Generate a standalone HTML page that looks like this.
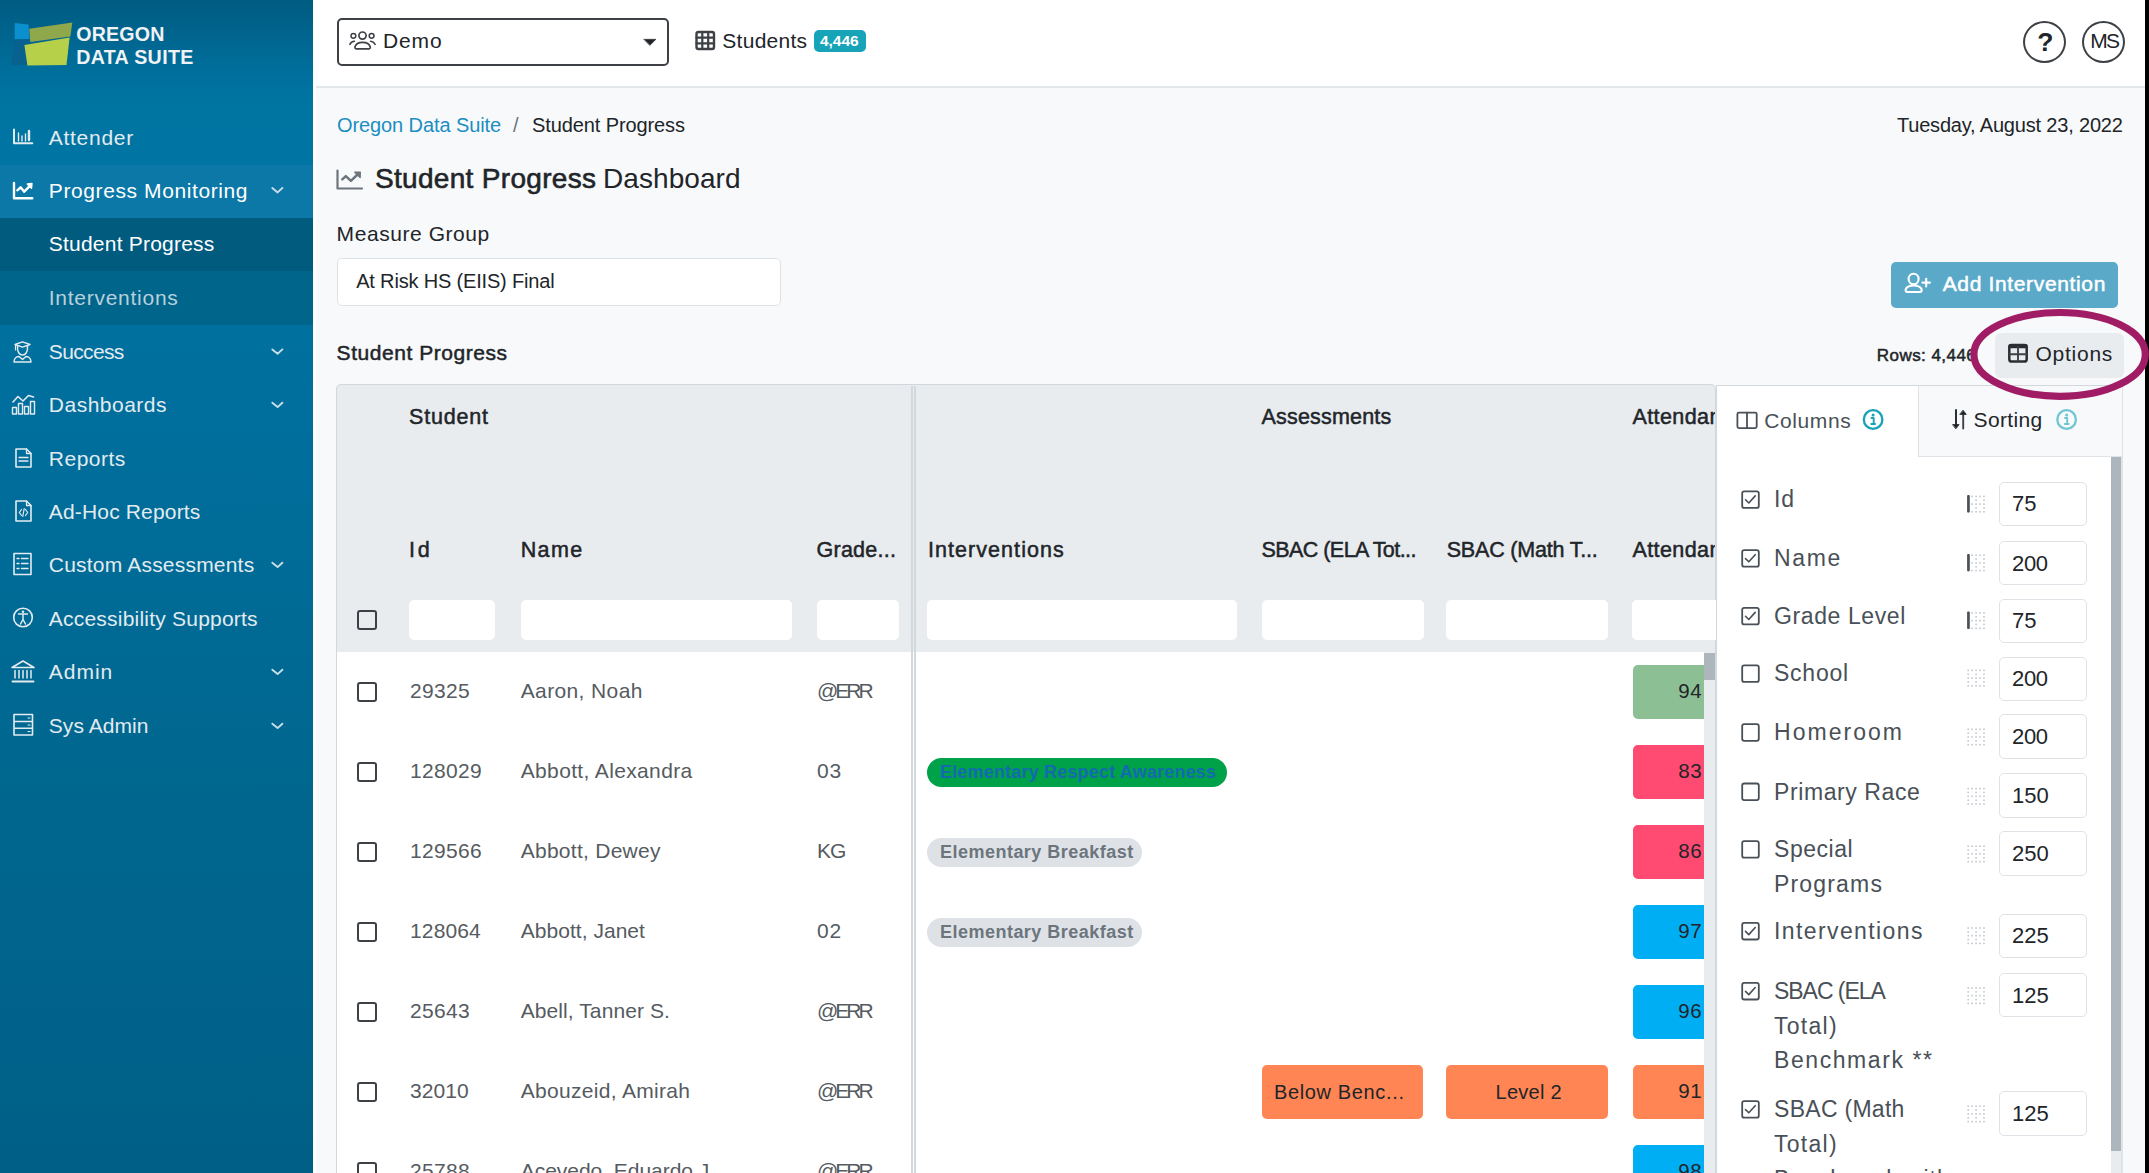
<!DOCTYPE html>
<html><head><meta charset="utf-8"><title>Student Progress Dashboard</title><style>
html,body{margin:0;padding:0;width:2149px;height:1173px;overflow:hidden;background:#f8f9fa;font-family:"Liberation Sans", sans-serif;}
.t{position:absolute;white-space:nowrap;line-height:1;}
.r{position:absolute;}
</style></head>
<body>
<div class="r" style="left:0;top:0;width:313px;height:1173px;background:linear-gradient(180deg,#005b81 0px,#00719f 80px,#0075a2 105px,#0074a2 160px,#006e9c 433px,#00678f 773px,#005f87 1173px);"></div>
<div class="r" style="left:0px;top:165px;width:313px;height:53px;background:#0b78a7;"></div>
<div class="r" style="left:0px;top:218px;width:313px;height:53px;background:#005b7f;"></div>
<div class="r" style="left:0px;top:271px;width:313px;height:54px;background:#00658a;"></div>
<div class="r" style="left:313px;top:0px;width:3px;height:1173px;background:#ffffff;"></div>
<svg class="r" style="left:0;top:0" width="210" height="80" viewBox="0 0 210 80">
<polygon points="14.7,23 28.5,24.5 29.5,39 14.7,39.5" fill="#0b8fce"/>
<polygon points="14.5,39.5 29.5,39 28,65 11.7,65" fill="#08618e"/>
<polygon points="29.3,28.8 72.3,22.5 70.4,36.6 30.3,42" fill="#8fa84c"/>
<polygon points="24.4,45 69.6,37.6 66.5,65 27.4,65.5" fill="#b6d04a"/>
</svg>
<div class="r" style="left:316px;top:0px;width:1829px;height:86px;background:#ffffff;"></div>
<div class="r" style="left:316px;top:86px;width:1829px;height:2px;background:#e3e7ea;"></div>
<div class="r" style="left:316px;top:88px;width:1829px;height:1085px;background:#f8f9fa;"></div>
<div class="r" style="left:2145px;top:0px;width:4px;height:1173px;background:#000000;"></div>
<div class="r" style="left:336.5px;top:18px;width:328px;height:43.5px;border:2.2px solid #3d4145;border-radius:5px;background:#fff"></div>
<div class="r" style="left:814px;top:30px;width:52px;height:22.2px;border-radius:5px;background:#17a3b8"></div>
<div class="r" style="left:2023px;top:21px;width:39px;height:38px;border:2.2px solid #3d4145;border-radius:50%"></div>
<div class="r" style="left:2082.2px;top:21px;width:39px;height:38px;border:2.2px solid #3d4145;border-radius:50%"></div>
<div class="r" style="left:336.6px;top:257.7px;width:442px;height:46px;border:1.6px solid #dfe3e7;border-radius:5px;background:#fff"></div>
<div class="r" style="left:1891.2px;top:262.1px;width:227.3px;height:46px;border-radius:5px;background:#5aa9c9"></div>
<div class="r" style="left:1995.2px;top:332.7px;width:129px;height:45.7px;border-radius:6px;background:#e9ecef"></div>
<div class="r" style="left:336px;top:384px;width:1380px;height:800px;border-radius:5px;background:#fff;"></div>
<div class="r" style="left:336px;top:384px;width:1380px;height:267.70000000000005px;background:#e9ecef;border-top-left-radius:5px;border-top-right-radius:5px;"></div>
<div class="r" style="left:336px;top:384px;width:1380px;height:800px;border:1.5px solid #d3d8dd;border-radius:5px;box-sizing:border-box"></div>
<div class="r" style="left:911px;top:385.5px;width:1.5px;height:787.5px;background:#d3d8dd;"></div>
<div class="r" style="left:914.2px;top:385.5px;width:1.5px;height:787.5px;background:#d3d8dd;"></div>
<div class="r" style="left:408.7px;top:599.5px;width:86.69999999999999px;height:40.799999999999955px;background:#ffffff;border-radius:5px;"></div>
<div class="r" style="left:520.7px;top:599.5px;width:271.19999999999993px;height:40.799999999999955px;background:#ffffff;border-radius:5px;"></div>
<div class="r" style="left:817.2px;top:599.5px;width:82.09999999999991px;height:40.799999999999955px;background:#ffffff;border-radius:5px;"></div>
<div class="r" style="left:927.4px;top:599.5px;width:309.6px;height:40.799999999999955px;background:#ffffff;border-radius:5px;"></div>
<div class="r" style="left:1262.4px;top:599.5px;width:161.19999999999982px;height:40.799999999999955px;background:#ffffff;border-radius:5px;"></div>
<div class="r" style="left:1446.1px;top:599.5px;width:161.80000000000018px;height:40.799999999999955px;background:#ffffff;border-radius:5px;"></div>
<div class="r" style="left:1632.4px;top:599.5px;width:97.59999999999991px;height:40.799999999999955px;background:#ffffff;border-radius:5px;"></div>
<div class="r" style="left:1632.7px;top:665.2px;width:71.1px;height:53.6px;border-radius:5px 0 0 5px;background:#8cbf94"></div>
<div class="r" style="left:1632.7px;top:745.2px;width:71.1px;height:53.6px;border-radius:5px 0 0 5px;background:#ff4a72"></div>
<div class="r" style="left:927.3px;top:757.6px;width:300.2px;height:29.5px;border-radius:15px;background:#00a249"></div>
<div class="r" style="left:1632.7px;top:825.2px;width:71.1px;height:53.6px;border-radius:5px 0 0 5px;background:#ff4a72"></div>
<div class="r" style="left:927.3px;top:837.6px;width:214.3px;height:29.5px;border-radius:15px;background:#dee2e6"></div>
<div class="r" style="left:1632.7px;top:905.2px;width:71.1px;height:53.6px;border-radius:5px 0 0 5px;background:#00aef4"></div>
<div class="r" style="left:927.3px;top:917.6px;width:214.3px;height:29.5px;border-radius:15px;background:#dee2e6"></div>
<div class="r" style="left:1632.7px;top:985.2px;width:71.1px;height:53.6px;border-radius:5px 0 0 5px;background:#00aef4"></div>
<div class="r" style="left:1632.7px;top:1065.2px;width:71.1px;height:53.6px;border-radius:5px 0 0 5px;background:#ff8554"></div>
<div class="r" style="left:1262.3px;top:1065.2px;width:161px;height:53.6px;border-radius:5px;background:#ff8554"></div>
<div class="r" style="left:1446.4px;top:1065.2px;width:161.3px;height:53.6px;border-radius:5px;background:#ff8554"></div>
<div class="r" style="left:1632.7px;top:1145.2px;width:71.1px;height:53.6px;border-radius:5px 0 0 5px;background:#00aef4"></div>
<div class="r" style="left:357.4px;top:609.5px;width:20px;height:20px;border:2.2px solid #3d4145;border-radius:3px;box-sizing:border-box"></div><div class="r" style="left:357.4px;top:682.0px;width:20px;height:20px;border:2.2px solid #3d4145;border-radius:3px;box-sizing:border-box"></div><div class="r" style="left:357.4px;top:762.0px;width:20px;height:20px;border:2.2px solid #3d4145;border-radius:3px;box-sizing:border-box"></div><div class="r" style="left:357.4px;top:842.0px;width:20px;height:20px;border:2.2px solid #3d4145;border-radius:3px;box-sizing:border-box"></div><div class="r" style="left:357.4px;top:922.0px;width:20px;height:20px;border:2.2px solid #3d4145;border-radius:3px;box-sizing:border-box"></div><div class="r" style="left:357.4px;top:1002.0px;width:20px;height:20px;border:2.2px solid #3d4145;border-radius:3px;box-sizing:border-box"></div><div class="r" style="left:357.4px;top:1082.0px;width:20px;height:20px;border:2.2px solid #3d4145;border-radius:3px;box-sizing:border-box"></div><div class="r" style="left:357.4px;top:1162.0px;width:20px;height:20px;border:2.2px solid #3d4145;border-radius:3px;box-sizing:border-box"></div>
<div class="t" id="t0" style="left:48.80px;top:126.71px;font-size:21px;font-weight:400;color:#e3ebf0;letter-spacing:0.715px;">Attender</div>
<div class="t" id="t1" style="left:48.80px;top:179.50px;font-size:21px;font-weight:400;color:#ffffff;letter-spacing:0.598px;">Progress Monitoring</div>
<div class="t" id="t2" style="left:48.80px;top:233.00px;font-size:21px;font-weight:400;color:#ffffff;letter-spacing:0.216px;">Student Progress</div>
<div class="t" id="t3" style="left:48.80px;top:286.61px;font-size:21px;font-weight:400;color:#b9d0dc;letter-spacing:0.730px;">Interventions</div>
<div class="t" id="t4" style="left:48.80px;top:341.40px;font-size:21px;font-weight:400;color:#e3ebf0;letter-spacing:-0.644px;">Success</div>
<div class="t" id="t5" style="left:48.80px;top:394.21px;font-size:21px;font-weight:400;color:#e3ebf0;letter-spacing:0.496px;">Dashboards</div>
<div class="t" id="t6" style="left:48.80px;top:448.00px;font-size:21px;font-weight:400;color:#e3ebf0;letter-spacing:0.495px;">Reports</div>
<div class="t" id="t7" style="left:48.80px;top:501.21px;font-size:21px;font-weight:400;color:#e3ebf0;letter-spacing:0.162px;">Ad-Hoc Reports</div>
<div class="t" id="t8" style="left:48.80px;top:554.00px;font-size:21px;font-weight:400;color:#e3ebf0;letter-spacing:0.202px;">Custom Assessments</div>
<div class="t" id="t9" style="left:48.80px;top:608.11px;font-size:21px;font-weight:400;color:#e3ebf0;letter-spacing:0.217px;">Accessibility Supports</div>
<div class="t" id="t10" style="left:48.80px;top:661.31px;font-size:21px;font-weight:400;color:#e3ebf0;letter-spacing:0.989px;">Admin</div>
<div class="t" id="t11" style="left:48.80px;top:715.00px;font-size:21px;font-weight:400;color:#e3ebf0;letter-spacing:0.039px;">Sys Admin</div>
<div class="t" id="t12" style="left:76.20px;top:24.61px;font-size:19.6px;font-weight:700;color:#f0f3f5;letter-spacing:0.212px;">OREGON</div>
<div class="t" id="t13" style="left:76.20px;top:48.00px;font-size:19.6px;font-weight:700;color:#f0f3f5;letter-spacing:0.357px;">DATA SUITE</div>
<div class="t" id="t14" style="left:2037.30px;top:28.90px;font-size:26.5px;font-weight:700;color:#212529;">?</div>
<div class="t" id="t15" style="left:383.00px;top:29.81px;font-size:21px;font-weight:400;color:#212529;letter-spacing:0.887px;">Demo</div>
<div class="t" id="t16" style="left:722.30px;top:29.61px;font-size:21px;font-weight:400;color:#212529;letter-spacing:0.272px;">Students</div>
<div class="t" id="t17" style="left:820.00px;top:32.71px;font-size:15.5px;font-weight:700;color:#ffffff;letter-spacing:-0.042px;">4,446</div>
<div class="t" id="t18" style="left:2090.20px;top:29.81px;font-size:21px;font-weight:400;color:#212529;letter-spacing:-1.793px;">MS</div>
<div class="t" id="t19" style="left:337.00px;top:115.01px;font-size:20px;font-weight:400;color:#1b8ec2;letter-spacing:-0.096px;">Oregon Data Suite</div>
<div class="t" id="t20" style="left:513.00px;top:115.01px;font-size:20px;font-weight:400;color:#6c757d;letter-spacing:0.060px;">/</div>
<div class="t" id="t21" style="left:532.00px;top:115.01px;font-size:20px;font-weight:400;color:#212529;letter-spacing:-0.102px;">Student Progress</div>
<div class="t" id="t22" style="left:1896.90px;top:114.61px;font-size:20px;font-weight:400;color:#212529;letter-spacing:-0.180px;">Tuesday, August 23, 2022</div>
<div class="t" id="t23" style="left:375.00px;top:164.61px;font-size:28px;font-weight:400;color:#212529;-webkit-text-stroke:0.6px #212529;letter-spacing:0.310px;">Student Progress</div>
<div class="t" id="t24" style="left:603.00px;top:165.20px;font-size:28px;font-weight:400;color:#212529;letter-spacing:0.074px;">Dashboard</div>
<div class="t" id="t25" style="left:336.60px;top:222.61px;font-size:21px;font-weight:400;color:#212529;letter-spacing:0.565px;">Measure Group</div>
<div class="t" id="t26" style="left:356.20px;top:270.61px;font-size:20px;font-weight:400;color:#212529;letter-spacing:-0.173px;">At Risk HS (EIIS) Final</div>
<div class="t" id="t27" style="left:336.60px;top:341.90px;font-size:21px;font-weight:400;color:#212529;-webkit-text-stroke:0.5px #212529;letter-spacing:0.549px;">Student Progress</div>
<div class="t" id="t28" style="left:1942.70px;top:272.71px;font-size:21px;font-weight:400;color:#ffffff;-webkit-text-stroke:0.5px #ffffff;letter-spacing:0.649px;">Add Intervention</div>
<div class="t" id="t29" style="left:1876.80px;top:346.60px;font-size:17px;font-weight:400;color:#212529;-webkit-text-stroke:0.5px #212529;letter-spacing:0.446px;">Rows: 4,446</div>
<div class="t" id="t30" style="left:2035.50px;top:343.00px;font-size:21px;font-weight:400;color:#212529;letter-spacing:0.738px;">Options</div>
<div class="t" id="t31" style="left:409.00px;top:407.40px;font-size:21.5px;font-weight:400;color:#212529;-webkit-text-stroke:0.5px #212529;letter-spacing:0.810px;">Student</div>
<div class="t" id="t32" style="left:1261.50px;top:407.21px;font-size:21.5px;font-weight:400;color:#212529;-webkit-text-stroke:0.5px #212529;letter-spacing:0.190px;">Assessments</div>
<div class="t" id="t33" style="left:1632.40px;top:407.21px;font-size:21.5px;font-weight:400;color:#212529;-webkit-text-stroke:0.5px #212529;letter-spacing:0.420px;width:82.9px;overflow:hidden;">Attendance</div>
<div class="t" id="t34" style="left:409.00px;top:540.40px;font-size:21.5px;font-weight:400;color:#212529;-webkit-text-stroke:0.5px #212529;letter-spacing:2.827px;">Id</div>
<div class="t" id="t35" style="left:520.70px;top:540.40px;font-size:21.5px;font-weight:400;color:#212529;-webkit-text-stroke:0.5px #212529;letter-spacing:1.402px;">Name</div>
<div class="t" id="t36" style="left:816.60px;top:540.40px;font-size:21.5px;font-weight:400;color:#212529;-webkit-text-stroke:0.5px #212529;letter-spacing:0.228px;">Grade...</div>
<div class="t" id="t37" style="left:928.00px;top:540.40px;font-size:21.5px;font-weight:400;color:#212529;-webkit-text-stroke:0.5px #212529;letter-spacing:1.054px;">Interventions</div>
<div class="t" id="t38" style="left:1261.50px;top:540.40px;font-size:21.5px;font-weight:400;color:#212529;-webkit-text-stroke:0.5px #212529;letter-spacing:-0.555px;">SBAC (ELA Tot...</div>
<div class="t" id="t39" style="left:1446.70px;top:540.40px;font-size:21.5px;font-weight:400;color:#212529;-webkit-text-stroke:0.5px #212529;letter-spacing:-0.189px;">SBAC (Math T...</div>
<div class="t" id="t40" style="left:1632.40px;top:540.40px;font-size:21.5px;font-weight:400;color:#212529;-webkit-text-stroke:0.5px #212529;letter-spacing:0.420px;width:82.9px;overflow:hidden;">Attendance</div>
<div class="t" id="t41" style="left:410.00px;top:679.81px;font-size:21px;font-weight:400;color:#555b61;letter-spacing:0.321px;">29325</div>
<div class="t" id="t42" style="left:520.70px;top:679.81px;font-size:21px;font-weight:400;color:#555b61;letter-spacing:0.377px;">Aaron, Noah</div>
<div class="t" id="t43" style="left:817.00px;top:679.81px;font-size:21px;font-weight:400;color:#555b61;letter-spacing:-3.030px;">@ERR</div>
<div class="t" id="t44" style="left:410.00px;top:759.81px;font-size:21px;font-weight:400;color:#555b61;letter-spacing:0.341px;">128029</div>
<div class="t" id="t45" style="left:520.70px;top:759.81px;font-size:21px;font-weight:400;color:#555b61;letter-spacing:0.358px;">Abbott, Alexandra</div>
<div class="t" id="t46" style="left:817.00px;top:759.81px;font-size:21px;font-weight:400;color:#555b61;letter-spacing:0.721px;">03</div>
<div class="t" id="t47" style="left:410.00px;top:839.81px;font-size:21px;font-weight:400;color:#555b61;letter-spacing:0.341px;">129566</div>
<div class="t" id="t48" style="left:520.70px;top:839.81px;font-size:21px;font-weight:400;color:#555b61;letter-spacing:0.269px;">Abbott, Dewey</div>
<div class="t" id="t49" style="left:817.00px;top:839.81px;font-size:21px;font-weight:400;color:#555b61;letter-spacing:-1.007px;">KG</div>
<div class="t" id="t50" style="left:410.00px;top:919.81px;font-size:21px;font-weight:400;color:#555b61;letter-spacing:0.141px;">128064</div>
<div class="t" id="t51" style="left:520.70px;top:919.81px;font-size:21px;font-weight:400;color:#555b61;letter-spacing:0.040px;">Abbott, Janet</div>
<div class="t" id="t52" style="left:817.00px;top:919.81px;font-size:21px;font-weight:400;color:#555b61;letter-spacing:0.721px;">02</div>
<div class="t" id="t53" style="left:410.00px;top:999.81px;font-size:21px;font-weight:400;color:#555b61;letter-spacing:0.321px;">25643</div>
<div class="t" id="t54" style="left:520.70px;top:999.81px;font-size:21px;font-weight:400;color:#555b61;letter-spacing:0.086px;">Abell, Tanner S.</div>
<div class="t" id="t55" style="left:817.00px;top:999.81px;font-size:21px;font-weight:400;color:#555b61;letter-spacing:-3.030px;">@ERR</div>
<div class="t" id="t56" style="left:410.00px;top:1079.81px;font-size:21px;font-weight:400;color:#555b61;letter-spacing:0.071px;">32010</div>
<div class="t" id="t57" style="left:520.70px;top:1079.81px;font-size:21px;font-weight:400;color:#555b61;letter-spacing:0.315px;">Abouzeid, Amirah</div>
<div class="t" id="t58" style="left:817.00px;top:1079.81px;font-size:21px;font-weight:400;color:#555b61;letter-spacing:-3.030px;">@ERR</div>
<div class="t" id="t59" style="left:410.00px;top:1159.81px;font-size:21px;font-weight:400;color:#555b61;letter-spacing:0.321px;">25788</div>
<div class="t" id="t60" style="left:520.70px;top:1159.81px;font-size:21px;font-weight:400;color:#555b61;letter-spacing:-0.034px;">Acevedo, Eduardo J.</div>
<div class="t" id="t61" style="left:817.00px;top:1159.81px;font-size:21px;font-weight:400;color:#555b61;letter-spacing:-3.030px;">@ERR</div>
<div class="t" id="t89" style="left:1678.20px;top:681.40px;font-size:20.5px;font-weight:400;color:#212529;letter-spacing:0.599px;width:25.6px;overflow:hidden;">94</div>
<div class="t" id="t90" style="left:1678.20px;top:761.40px;font-size:20.5px;font-weight:400;color:#212529;letter-spacing:0.599px;width:25.6px;overflow:hidden;">83</div>
<div class="t" id="t91" style="left:940.00px;top:762.51px;font-size:18px;font-weight:700;color:#146ab0;letter-spacing:0.181px;">Elementary Respect Awareness</div>
<div class="t" id="t92" style="left:1678.20px;top:841.40px;font-size:20.5px;font-weight:400;color:#212529;letter-spacing:0.599px;width:25.6px;overflow:hidden;">86</div>
<div class="t" id="t93" style="left:940.00px;top:843.20px;font-size:18px;font-weight:700;color:#6c757d;letter-spacing:0.479px;">Elementary Breakfast</div>
<div class="t" id="t94" style="left:1678.20px;top:921.40px;font-size:20.5px;font-weight:400;color:#212529;letter-spacing:0.599px;width:25.6px;overflow:hidden;">97</div>
<div class="t" id="t95" style="left:940.00px;top:923.20px;font-size:18px;font-weight:700;color:#6c757d;letter-spacing:0.479px;">Elementary Breakfast</div>
<div class="t" id="t96" style="left:1678.20px;top:1001.40px;font-size:20.5px;font-weight:400;color:#212529;letter-spacing:0.599px;width:25.6px;overflow:hidden;">96</div>
<div class="t" id="t97" style="left:1678.20px;top:1081.40px;font-size:20.5px;font-weight:400;color:#212529;letter-spacing:0.599px;width:25.6px;overflow:hidden;">91</div>
<div class="t" id="t98" style="left:1274.00px;top:1081.82px;font-size:20px;font-weight:400;color:#212529;letter-spacing:0.639px;">Below Benc...</div>
<div class="t" id="t99" style="left:1495.50px;top:1081.82px;font-size:20px;font-weight:400;color:#212529;letter-spacing:0.272px;">Level 2</div>
<div class="t" id="t100" style="left:1678.20px;top:1161.40px;font-size:20.5px;font-weight:400;color:#212529;letter-spacing:0.599px;width:25.6px;overflow:hidden;">98</div>
<div class="r" style="left:1715.5px;top:384.5px;width:407.2px;height:800px;background:#fff;border-left:1.5px solid #d3d8dd;border-top:1.5px solid #d3d8dd;box-sizing:border-box"></div>
<div class="r" style="left:1918px;top:386px;width:204.7px;height:71px;background:#f8f9fa;border-left:1.5px solid #dfe3e7;border-bottom:1.5px solid #dfe3e7;border-right:1.5px solid #dfe3e7;box-sizing:border-box"></div>
<div class="r" style="left:2110.7px;top:457px;width:12.0px;height:716px;background:#e9ecef;"></div>
<div class="r" style="left:2110.7px;top:457px;width:10.5px;height:694.4000000000001px;background:#adb5bd;"></div>
<div class="r" style="left:2121.2px;top:457px;width:1.5px;height:716px;background:#dfe3e7;"></div>
<div class="r" style="left:1703.8px;top:652px;width:11.5px;height:521px;background:#e9ecef;"></div>
<div class="r" style="left:1703.8px;top:652.5px;width:11.5px;height:27.299999999999955px;background:#adb5bd;"></div>
<div class="r" style="left:1998.6px;top:481.5px;width:88px;height:44.5px;border:1.5px solid #dfe3e7;border-radius:5px;background:#fff;box-sizing:border-box"></div>
<div class="r" style="left:1998.6px;top:540.9px;width:88px;height:44.5px;border:1.5px solid #dfe3e7;border-radius:5px;background:#fff;box-sizing:border-box"></div>
<div class="r" style="left:1998.6px;top:598.6px;width:88px;height:44.5px;border:1.5px solid #dfe3e7;border-radius:5px;background:#fff;box-sizing:border-box"></div>
<div class="r" style="left:1998.6px;top:656.5px;width:88px;height:44.5px;border:1.5px solid #dfe3e7;border-radius:5px;background:#fff;box-sizing:border-box"></div>
<div class="r" style="left:1998.6px;top:714.1px;width:88px;height:44.5px;border:1.5px solid #dfe3e7;border-radius:5px;background:#fff;box-sizing:border-box"></div>
<div class="r" style="left:1998.6px;top:773.4px;width:88px;height:44.5px;border:1.5px solid #dfe3e7;border-radius:5px;background:#fff;box-sizing:border-box"></div>
<div class="r" style="left:1998.6px;top:831px;width:88px;height:44.5px;border:1.5px solid #dfe3e7;border-radius:5px;background:#fff;box-sizing:border-box"></div>
<div class="r" style="left:1998.6px;top:913.6px;width:88px;height:44.5px;border:1.5px solid #dfe3e7;border-radius:5px;background:#fff;box-sizing:border-box"></div>
<div class="r" style="left:1998.6px;top:972.9px;width:88px;height:44.5px;border:1.5px solid #dfe3e7;border-radius:5px;background:#fff;box-sizing:border-box"></div>
<div class="r" style="left:1998.6px;top:1091px;width:88px;height:44.5px;border:1.5px solid #dfe3e7;border-radius:5px;background:#fff;box-sizing:border-box"></div>
<div class="t" id="t62" style="left:1764.20px;top:410.21px;font-size:21px;font-weight:400;color:#495057;letter-spacing:0.606px;">Columns</div>
<div class="t" id="t63" style="left:1973.60px;top:409.21px;font-size:21px;font-weight:400;color:#212529;letter-spacing:0.357px;">Sorting</div>
<div class="t" id="t64" style="left:1774.00px;top:488.41px;font-size:23px;font-weight:400;color:#495057;letter-spacing:0.931px;">Id</div>
<div class="t" id="t65" style="left:2012.10px;top:493.11px;font-size:22px;font-weight:400;color:#212529;letter-spacing:-0.135px;">75</div>
<div class="t" id="t66" style="left:1774.00px;top:547.21px;font-size:23px;font-weight:400;color:#495057;letter-spacing:1.613px;">Name</div>
<div class="t" id="t67" style="left:2012.10px;top:552.50px;font-size:22px;font-weight:400;color:#212529;letter-spacing:-0.435px;">200</div>
<div class="t" id="t68" style="left:1774.00px;top:604.91px;font-size:23px;font-weight:400;color:#495057;letter-spacing:0.601px;">Grade Level</div>
<div class="t" id="t69" style="left:2012.10px;top:610.21px;font-size:22px;font-weight:400;color:#212529;letter-spacing:-0.135px;">75</div>
<div class="t" id="t70" style="left:1774.00px;top:662.41px;font-size:23px;font-weight:400;color:#495057;letter-spacing:0.757px;">School</div>
<div class="t" id="t71" style="left:2012.10px;top:668.11px;font-size:22px;font-weight:400;color:#212529;letter-spacing:-0.435px;">200</div>
<div class="t" id="t72" style="left:1774.00px;top:721.31px;font-size:23px;font-weight:400;color:#495057;letter-spacing:2.029px;">Homeroom</div>
<div class="t" id="t73" style="left:2012.10px;top:725.71px;font-size:22px;font-weight:400;color:#212529;letter-spacing:-0.435px;">200</div>
<div class="t" id="t74" style="left:1774.00px;top:780.60px;font-size:23px;font-weight:400;color:#495057;letter-spacing:0.590px;">Primary Race</div>
<div class="t" id="t75" style="left:2012.10px;top:785.00px;font-size:22px;font-weight:400;color:#212529;">150</div>
<div class="t" id="t76" style="left:1774.00px;top:838.21px;font-size:23px;font-weight:400;color:#495057;letter-spacing:0.546px;">Special</div>
<div class="t" id="t77" style="left:1774.00px;top:872.91px;font-size:23px;font-weight:400;color:#495057;letter-spacing:1.172px;">Programs</div>
<div class="t" id="t78" style="left:2012.10px;top:842.61px;font-size:22px;font-weight:400;color:#212529;">250</div>
<div class="t" id="t79" style="left:1774.00px;top:920.01px;font-size:23px;font-weight:400;color:#495057;letter-spacing:1.401px;">Interventions</div>
<div class="t" id="t80" style="left:2012.10px;top:925.21px;font-size:22px;font-weight:400;color:#212529;">225</div>
<div class="t" id="t81" style="left:1774.00px;top:980.01px;font-size:23px;font-weight:400;color:#495057;letter-spacing:-1.039px;">SBAC (ELA</div>
<div class="t" id="t82" style="left:1774.00px;top:1014.71px;font-size:23px;font-weight:400;color:#495057;letter-spacing:1.283px;">Total)</div>
<div class="t" id="t83" style="left:1774.00px;top:1049.41px;font-size:23px;font-weight:400;color:#495057;letter-spacing:1.576px;">Benchmark **</div>
<div class="t" id="t84" style="left:2012.10px;top:984.50px;font-size:22px;font-weight:400;color:#212529;">125</div>
<div class="t" id="t85" style="left:1774.00px;top:1098.21px;font-size:23px;font-weight:400;color:#495057;letter-spacing:0.286px;">SBAC (Math</div>
<div class="t" id="t86" style="left:1774.00px;top:1132.91px;font-size:23px;font-weight:400;color:#495057;letter-spacing:1.283px;">Total)</div>
<div class="t" id="t87" style="left:1774.00px;top:1167.60px;font-size:23px;font-weight:400;color:#495057;letter-spacing:0.931px;">Benchmark with</div>
<div class="t" id="t88" style="left:2012.10px;top:1102.61px;font-size:22px;font-weight:400;color:#212529;">125</div>
<svg class="r" style="left:0;top:0" width="2149" height="1173" viewBox="0 0 2149 1173"><path d="M14,129.5 V143.3 H32.3" fill="none" stroke="#e3ebf0" stroke-width="2" stroke-linecap="round" stroke-linejoin="round" /><path d="M18.5,133 V141 M22,136 V141 M25.5,134 V141" fill="none" stroke="#e3ebf0" stroke-width="1.4" stroke-linecap="round" stroke-linejoin="round" /><path d="M29,131 V140" fill="none" stroke="#e3ebf0" stroke-width="2.4" stroke-linecap="round" stroke-linejoin="round" /><path d="M14,183 V198.2 H32.3" fill="none" stroke="#ffffff" stroke-width="2.4" stroke-linecap="round" stroke-linejoin="round" /><path d="M17.3,190.3 L20.6,187.3 L24.2,191.7 L30.4,185.4" fill="none" stroke="#ffffff" stroke-width="2.4" stroke-linecap="round" stroke-linejoin="round" /><path d="M27.3,184 L31.9,183.6 L31.5,188.2 Z" fill="#ffffff" stroke="#ffffff" stroke-width="1.5" stroke-linecap="round" stroke-linejoin="round" /><path d="M15,344.5 L22.5,341.8 L30,344.5 L22.5,347.2 Z" fill="none" stroke="#e3ebf0" stroke-width="1.4" stroke-linecap="round" stroke-linejoin="round" /><path d="M17.5,346 C17,352 19.5,355 22.5,355 C25.5,355 28,352 27.5,346" fill="none" stroke="#e3ebf0" stroke-width="1.5" stroke-linecap="round" stroke-linejoin="round" /><path d="M14,362 C14,357.5 17.5,356.5 19,356.5 L22.5,359.5 L26,356.5 C27.5,356.5 31,357.5 31,362 Z" fill="none" stroke="#e3ebf0" stroke-width="1.5" stroke-linecap="round" stroke-linejoin="round" /><path d="M15.5,345 V350" fill="none" stroke="#e3ebf0" stroke-width="1.2" stroke-linecap="round" stroke-linejoin="round" /><path d="M13,402 L18,396.5 L23,401 L28.5,395.5 L33.5,397" fill="none" stroke="#e3ebf0" stroke-width="1.6" stroke-linecap="round" stroke-linejoin="round" /><path d="M12.5,407.5 h4 v6.5 h-4 Z M18.5,403.5 h4 v10.5 h-4 Z M24.5,406.5 h4 v7.5 h-4 Z M30.5,401.5 h4 v12.5 h-4 Z" fill="none" stroke="#e3ebf0" stroke-width="1.4" stroke-linecap="round" stroke-linejoin="round" /><path d="M16,449 H26.5 L31,453.5 V467 H16 Z" fill="none" stroke="#e3ebf0" stroke-width="1.6" stroke-linecap="round" stroke-linejoin="round" /><path d="M26.5,449 V453.5 H31" fill="none" stroke="#e3ebf0" stroke-width="1.3" stroke-linecap="round" stroke-linejoin="round" /><path d="M19,457.5 H28 M19,461 H28" fill="none" stroke="#e3ebf0" stroke-width="1.3" stroke-linecap="round" stroke-linejoin="round" /><path d="M16,501 H26.5 L31,505.5 V521 H16 Z" fill="none" stroke="#e3ebf0" stroke-width="1.6" stroke-linecap="round" stroke-linejoin="round" /><path d="M26.5,501 V505.5 H31" fill="none" stroke="#e3ebf0" stroke-width="1.3" stroke-linecap="round" stroke-linejoin="round" /><path d="M21.5,509.5 L19.3,512.5 L21.5,515.5 M25.5,509.5 L27.7,512.5 L25.5,515.5 M24.2,508.5 L22.8,516.5" fill="none" stroke="#e3ebf0" stroke-width="1.2" stroke-linecap="round" stroke-linejoin="round" /><path d="M14,553.5 H31 V574.5 H14 Z" fill="none" stroke="#e3ebf0" stroke-width="1.6" stroke-linecap="round" stroke-linejoin="round" /><path d="M17,558.5 h2 M21.5,558.5 H28 M17,563.5 h2 M21.5,563.5 H28 M17,568.5 h2 M21.5,568.5 H28" fill="none" stroke="#e3ebf0" stroke-width="1.4" stroke-linecap="round" stroke-linejoin="round" /><circle cx="23" cy="617.5" r="9.3" fill="none" stroke="#e3ebf0" stroke-width="1.6"/><path d="M18.5,614 H27.5 M23,614 V619.5 L20.5,624 M23,619.5 L25.5,624" fill="none" stroke="#e3ebf0" stroke-width="1.5" stroke-linecap="round" stroke-linejoin="round" /><circle cx="23" cy="611.8" r="1.3" fill="#e3ebf0"/><path d="M12,667.5 L23,661 L34,667.5 Z" fill="none" stroke="#e3ebf0" stroke-width="1.6" stroke-linecap="round" stroke-linejoin="round" /><path d="M15,670.5 V678 M19,670.5 V678 M23,670.5 V678 M27,670.5 V678 M31,670.5 V678" fill="none" stroke="#e3ebf0" stroke-width="1.5" stroke-linecap="round" stroke-linejoin="round" /><path d="M12.5,681.5 H33.5" fill="none" stroke="#e3ebf0" stroke-width="2" stroke-linecap="round" stroke-linejoin="round" /><path d="M14,714.5 H32.5 V735 H14 Z M14,721.5 H32.5 M14,728.3 H32.5" fill="none" stroke="#e3ebf0" stroke-width="1.6" stroke-linecap="round" stroke-linejoin="round" /><path d="M28,718 h2 M28,725 h2 M28,731.5 h2" fill="none" stroke="#e3ebf0" stroke-width="1.2" stroke-linecap="round" stroke-linejoin="round" /><path d="M272.3,188.0 L277.6,192.4 L282.4,188.0" fill="none" stroke="#c9dee7" stroke-width="1.9" stroke-linecap="round" stroke-linejoin="round" /><path d="M272.3,349.4 L277.6,353.8 L282.4,349.4" fill="none" stroke="#c9dee7" stroke-width="1.9" stroke-linecap="round" stroke-linejoin="round" /><path d="M272.3,402.7 L277.6,407.1 L282.4,402.7" fill="none" stroke="#c9dee7" stroke-width="1.9" stroke-linecap="round" stroke-linejoin="round" /><path d="M272.3,562.7 L277.6,567.1 L282.4,562.7" fill="none" stroke="#c9dee7" stroke-width="1.9" stroke-linecap="round" stroke-linejoin="round" /><path d="M272.3,669.7 L277.6,674.1 L282.4,669.7" fill="none" stroke="#c9dee7" stroke-width="1.9" stroke-linecap="round" stroke-linejoin="round" /><path d="M272.3,723.7 L277.6,728.1 L282.4,723.7" fill="none" stroke="#c9dee7" stroke-width="1.9" stroke-linecap="round" stroke-linejoin="round" /><path d="M349.9,44.3 C350.9,42.3 352.4,41.5 354.4,41.3 M375.1,44.3 C374.1,42.3 372.6,41.5 370.6,41.3" fill="none" stroke="#3d4145" stroke-width="1.6" stroke-linecap="round" stroke-linejoin="round" /><path d="M356.6,48.8 H368.6 C369.9,48.8 370.5,48 370.2,46.8 C369.4,43.7 367.1,42.3 362.6,42.3 C358.1,42.3 355.8,43.7 355,46.8 C354.7,48 355.3,48.8 356.6,48.8 Z" fill="none" stroke="#3d4145" stroke-width="1.7" stroke-linecap="round" stroke-linejoin="round" /><circle cx="362.5" cy="35.6" r="3.6" fill="none" stroke="#3d4145" stroke-width="1.7"/><circle cx="353.4" cy="35.8" r="2.4" fill="none" stroke="#3d4145" stroke-width="1.5"/><circle cx="371.6" cy="35.8" r="2.4" fill="none" stroke="#3d4145" stroke-width="1.5"/><path d="M644,39.3 H656 L650,45.3 Z" fill="#212529" stroke="#212529" stroke-width="0.5" stroke-linecap="round" stroke-linejoin="round" /><rect x="696.5" y="32" width="17.5" height="17" rx="2" fill="none" stroke="#3d4145" stroke-width="2.4"/><path d="M702.3,32 V49 M708.2,32 V49 M696.5,37.7 H714 M696.5,43.3 H714" fill="none" stroke="#3d4145" stroke-width="2.2" stroke-linecap="round" stroke-linejoin="round" /><path d="M337.5,170.5 V188.5 H362" fill="none" stroke="#6c757d" stroke-width="2.2" stroke-linecap="round" stroke-linejoin="round" /><path d="M342.3,179.4 L345.8,176.1 L350.9,180.9 L357.5,174.5" fill="none" stroke="#6c757d" stroke-width="2.5" stroke-linecap="round" stroke-linejoin="round" /><path d="M354.8,172.2 L360.3,172.2 L360.1,177.6 Z" fill="#6c757d" stroke="#6c757d" stroke-width="1.4" stroke-linecap="round" stroke-linejoin="round" /><path d="M1907.5,292 C1905.5,292 1905.2,290 1906,288.6 C1907.3,286.5 1910,285.5 1913.6,285.5 C1917.2,285.5 1920,286.5 1921.3,288.6 C1922.1,290 1921.8,292 1919.8,292 Z" fill="none" stroke="#ffffff" stroke-width="2.1" stroke-linecap="round" stroke-linejoin="round" /><ellipse cx="1913.6" cy="279" rx="5" ry="5.3" fill="none" stroke="#ffffff" stroke-width="2.1"/><path d="M1922.4,282.6 H1930 M1926.2,278.8 V286.4" fill="none" stroke="#ffffff" stroke-width="2.1" stroke-linecap="round" stroke-linejoin="round" /><rect x="2009.3" y="345" width="17.4" height="16.6" rx="2.4" fill="none" stroke="#2a2e32" stroke-width="2.5"/><rect x="2008.5" y="344" width="19" height="4.2" rx="1.5" fill="#2a2e32"/><path d="M2018,347 V361 M2009.5,354.2 H2026.5" fill="none" stroke="#3d4145" stroke-width="1.9" stroke-linecap="round" stroke-linejoin="round" stroke-linecap="butt"/><rect x="1737.4" y="412.6" width="19.3" height="15.5" rx="1.5" fill="none" stroke="#495057" stroke-width="1.8"/><path d="M1747,412.6 V428.1" fill="none" stroke="#495057" stroke-width="1.8" stroke-linecap="round" stroke-linejoin="round" /><circle cx="1873.1" cy="419.5" r="9.3" fill="none" stroke="#17a2b8" stroke-width="2.3"/><circle cx="1873.1" cy="414.9" r="1.5" fill="#17a2b8"/><path d="M1871.5,418 H1873.6999999999998 V423.6 M1871.3,424 H1875.1" fill="none" stroke="#17a2b8" stroke-width="1.9" stroke-linecap="round" stroke-linejoin="round" stroke-linecap="butt"/><circle cx="2066.6" cy="419.5" r="9.3" fill="none" stroke="#6ec6d3" stroke-width="2.3"/><circle cx="2066.6" cy="414.9" r="1.5" fill="#6ec6d3"/><path d="M2065.0,418 H2067.2 V423.6 M2064.7999999999997,424 H2068.6" fill="none" stroke="#6ec6d3" stroke-width="1.9" stroke-linecap="round" stroke-linejoin="round" stroke-linecap="butt"/><path d="M1956,410 V425" fill="none" stroke="#212529" stroke-width="1.9" stroke-linecap="round" stroke-linejoin="round" stroke-linecap="butt"/><path d="M1952.9,424.6 L1959.1,424.6 L1956,428.6 Z" fill="#212529" stroke="#212529" stroke-width="0.8" stroke-linecap="round" stroke-linejoin="round" /><path d="M1963.2,428.6 V414" fill="none" stroke="#3d4145" stroke-width="1.9" stroke-linecap="round" stroke-linejoin="round" stroke-linecap="butt"/><path d="M1960.1,414.4 L1966.3,414.4 L1963.2,410.4 Z" fill="#212529" stroke="#212529" stroke-width="0.8" stroke-linecap="round" stroke-linejoin="round" /><rect x="1742.2" y="491.3" width="16.6" height="16.6" rx="2" fill="none" stroke="#495057" stroke-width="1.8"/><path d="M1745.5,499.8 L1748.8,503.0 L1755.2,495.9" fill="none" stroke="#495057" stroke-width="1.6" stroke-linecap="round" stroke-linejoin="round" /><rect x="1967.4" y="495.6" width="1.6" height="1.6" fill="#c3c8cd"/><rect x="1971.2" y="495.6" width="1.6" height="1.6" fill="#c3c8cd"/><rect x="1975.3" y="495.6" width="1.6" height="1.6" fill="#c3c8cd"/><rect x="1979.2" y="495.6" width="1.6" height="1.6" fill="#c3c8cd"/><rect x="1983.2" y="495.6" width="1.6" height="1.6" fill="#c3c8cd"/><rect x="1967.4" y="499.4" width="1.6" height="1.6" fill="#c3c8cd"/><rect x="1975.3" y="499.4" width="1.6" height="1.6" fill="#c3c8cd"/><rect x="1983.2" y="499.4" width="1.6" height="1.6" fill="#c3c8cd"/><rect x="1967.4" y="503.3" width="1.6" height="1.6" fill="#c3c8cd"/><rect x="1971.2" y="503.3" width="1.6" height="1.6" fill="#c3c8cd"/><rect x="1975.3" y="503.3" width="1.6" height="1.6" fill="#c3c8cd"/><rect x="1979.2" y="503.3" width="1.6" height="1.6" fill="#c3c8cd"/><rect x="1983.2" y="503.3" width="1.6" height="1.6" fill="#c3c8cd"/><rect x="1967.4" y="507.1" width="1.6" height="1.6" fill="#c3c8cd"/><rect x="1975.3" y="507.1" width="1.6" height="1.6" fill="#c3c8cd"/><rect x="1983.2" y="507.1" width="1.6" height="1.6" fill="#c3c8cd"/><rect x="1967.4" y="511.0" width="1.6" height="1.6" fill="#c3c8cd"/><rect x="1971.2" y="511.0" width="1.6" height="1.6" fill="#c3c8cd"/><rect x="1975.3" y="511.0" width="1.6" height="1.6" fill="#c3c8cd"/><rect x="1979.2" y="511.0" width="1.6" height="1.6" fill="#c3c8cd"/><rect x="1983.2" y="511.0" width="1.6" height="1.6" fill="#c3c8cd"/><rect x="1967.1" y="495.1" width="2.7" height="17.4" rx="1" fill="#495057"/><rect x="1742.2" y="550.1" width="16.6" height="16.6" rx="2" fill="none" stroke="#495057" stroke-width="1.8"/><path d="M1745.5,558.6 L1748.8,561.8 L1755.2,554.7" fill="none" stroke="#495057" stroke-width="1.6" stroke-linecap="round" stroke-linejoin="round" /><rect x="1967.4" y="554.4" width="1.6" height="1.6" fill="#c3c8cd"/><rect x="1971.2" y="554.4" width="1.6" height="1.6" fill="#c3c8cd"/><rect x="1975.3" y="554.4" width="1.6" height="1.6" fill="#c3c8cd"/><rect x="1979.2" y="554.4" width="1.6" height="1.6" fill="#c3c8cd"/><rect x="1983.2" y="554.4" width="1.6" height="1.6" fill="#c3c8cd"/><rect x="1967.4" y="558.3" width="1.6" height="1.6" fill="#c3c8cd"/><rect x="1975.3" y="558.3" width="1.6" height="1.6" fill="#c3c8cd"/><rect x="1983.2" y="558.3" width="1.6" height="1.6" fill="#c3c8cd"/><rect x="1967.4" y="562.1" width="1.6" height="1.6" fill="#c3c8cd"/><rect x="1971.2" y="562.1" width="1.6" height="1.6" fill="#c3c8cd"/><rect x="1975.3" y="562.1" width="1.6" height="1.6" fill="#c3c8cd"/><rect x="1979.2" y="562.1" width="1.6" height="1.6" fill="#c3c8cd"/><rect x="1983.2" y="562.1" width="1.6" height="1.6" fill="#c3c8cd"/><rect x="1967.4" y="566.0" width="1.6" height="1.6" fill="#c3c8cd"/><rect x="1975.3" y="566.0" width="1.6" height="1.6" fill="#c3c8cd"/><rect x="1983.2" y="566.0" width="1.6" height="1.6" fill="#c3c8cd"/><rect x="1967.4" y="569.8" width="1.6" height="1.6" fill="#c3c8cd"/><rect x="1971.2" y="569.8" width="1.6" height="1.6" fill="#c3c8cd"/><rect x="1975.3" y="569.8" width="1.6" height="1.6" fill="#c3c8cd"/><rect x="1979.2" y="569.8" width="1.6" height="1.6" fill="#c3c8cd"/><rect x="1983.2" y="569.8" width="1.6" height="1.6" fill="#c3c8cd"/><rect x="1967.1" y="553.9" width="2.7" height="17.4" rx="1" fill="#495057"/><rect x="1742.2" y="607.8" width="16.6" height="16.6" rx="2" fill="none" stroke="#495057" stroke-width="1.8"/><path d="M1745.5,616.3 L1748.8,619.5 L1755.2,612.4" fill="none" stroke="#495057" stroke-width="1.6" stroke-linecap="round" stroke-linejoin="round" /><rect x="1967.4" y="612.1" width="1.6" height="1.6" fill="#c3c8cd"/><rect x="1971.2" y="612.1" width="1.6" height="1.6" fill="#c3c8cd"/><rect x="1975.3" y="612.1" width="1.6" height="1.6" fill="#c3c8cd"/><rect x="1979.2" y="612.1" width="1.6" height="1.6" fill="#c3c8cd"/><rect x="1983.2" y="612.1" width="1.6" height="1.6" fill="#c3c8cd"/><rect x="1967.4" y="616.0" width="1.6" height="1.6" fill="#c3c8cd"/><rect x="1975.3" y="616.0" width="1.6" height="1.6" fill="#c3c8cd"/><rect x="1983.2" y="616.0" width="1.6" height="1.6" fill="#c3c8cd"/><rect x="1967.4" y="619.8" width="1.6" height="1.6" fill="#c3c8cd"/><rect x="1971.2" y="619.8" width="1.6" height="1.6" fill="#c3c8cd"/><rect x="1975.3" y="619.8" width="1.6" height="1.6" fill="#c3c8cd"/><rect x="1979.2" y="619.8" width="1.6" height="1.6" fill="#c3c8cd"/><rect x="1983.2" y="619.8" width="1.6" height="1.6" fill="#c3c8cd"/><rect x="1967.4" y="623.6" width="1.6" height="1.6" fill="#c3c8cd"/><rect x="1975.3" y="623.6" width="1.6" height="1.6" fill="#c3c8cd"/><rect x="1983.2" y="623.6" width="1.6" height="1.6" fill="#c3c8cd"/><rect x="1967.4" y="627.5" width="1.6" height="1.6" fill="#c3c8cd"/><rect x="1971.2" y="627.5" width="1.6" height="1.6" fill="#c3c8cd"/><rect x="1975.3" y="627.5" width="1.6" height="1.6" fill="#c3c8cd"/><rect x="1979.2" y="627.5" width="1.6" height="1.6" fill="#c3c8cd"/><rect x="1983.2" y="627.5" width="1.6" height="1.6" fill="#c3c8cd"/><rect x="1967.1" y="611.6" width="2.7" height="17.4" rx="1" fill="#495057"/><rect x="1742.2" y="665.3" width="16.6" height="16.6" rx="2" fill="none" stroke="#495057" stroke-width="1.8"/><rect x="1967.4" y="669.6" width="1.6" height="1.6" fill="#c3c8cd"/><rect x="1971.2" y="669.6" width="1.6" height="1.6" fill="#c3c8cd"/><rect x="1975.3" y="669.6" width="1.6" height="1.6" fill="#c3c8cd"/><rect x="1979.2" y="669.6" width="1.6" height="1.6" fill="#c3c8cd"/><rect x="1983.2" y="669.6" width="1.6" height="1.6" fill="#c3c8cd"/><rect x="1967.4" y="673.5" width="1.6" height="1.6" fill="#c3c8cd"/><rect x="1975.3" y="673.5" width="1.6" height="1.6" fill="#c3c8cd"/><rect x="1983.2" y="673.5" width="1.6" height="1.6" fill="#c3c8cd"/><rect x="1967.4" y="677.3" width="1.6" height="1.6" fill="#c3c8cd"/><rect x="1971.2" y="677.3" width="1.6" height="1.6" fill="#c3c8cd"/><rect x="1975.3" y="677.3" width="1.6" height="1.6" fill="#c3c8cd"/><rect x="1979.2" y="677.3" width="1.6" height="1.6" fill="#c3c8cd"/><rect x="1983.2" y="677.3" width="1.6" height="1.6" fill="#c3c8cd"/><rect x="1967.4" y="681.1" width="1.6" height="1.6" fill="#c3c8cd"/><rect x="1975.3" y="681.1" width="1.6" height="1.6" fill="#c3c8cd"/><rect x="1983.2" y="681.1" width="1.6" height="1.6" fill="#c3c8cd"/><rect x="1967.4" y="685.0" width="1.6" height="1.6" fill="#c3c8cd"/><rect x="1971.2" y="685.0" width="1.6" height="1.6" fill="#c3c8cd"/><rect x="1975.3" y="685.0" width="1.6" height="1.6" fill="#c3c8cd"/><rect x="1979.2" y="685.0" width="1.6" height="1.6" fill="#c3c8cd"/><rect x="1983.2" y="685.0" width="1.6" height="1.6" fill="#c3c8cd"/><rect x="1742.2" y="724.2" width="16.6" height="16.6" rx="2" fill="none" stroke="#495057" stroke-width="1.8"/><rect x="1967.4" y="728.5" width="1.6" height="1.6" fill="#c3c8cd"/><rect x="1971.2" y="728.5" width="1.6" height="1.6" fill="#c3c8cd"/><rect x="1975.3" y="728.5" width="1.6" height="1.6" fill="#c3c8cd"/><rect x="1979.2" y="728.5" width="1.6" height="1.6" fill="#c3c8cd"/><rect x="1983.2" y="728.5" width="1.6" height="1.6" fill="#c3c8cd"/><rect x="1967.4" y="732.4" width="1.6" height="1.6" fill="#c3c8cd"/><rect x="1975.3" y="732.4" width="1.6" height="1.6" fill="#c3c8cd"/><rect x="1983.2" y="732.4" width="1.6" height="1.6" fill="#c3c8cd"/><rect x="1967.4" y="736.2" width="1.6" height="1.6" fill="#c3c8cd"/><rect x="1971.2" y="736.2" width="1.6" height="1.6" fill="#c3c8cd"/><rect x="1975.3" y="736.2" width="1.6" height="1.6" fill="#c3c8cd"/><rect x="1979.2" y="736.2" width="1.6" height="1.6" fill="#c3c8cd"/><rect x="1983.2" y="736.2" width="1.6" height="1.6" fill="#c3c8cd"/><rect x="1967.4" y="740.0" width="1.6" height="1.6" fill="#c3c8cd"/><rect x="1975.3" y="740.0" width="1.6" height="1.6" fill="#c3c8cd"/><rect x="1983.2" y="740.0" width="1.6" height="1.6" fill="#c3c8cd"/><rect x="1967.4" y="743.9" width="1.6" height="1.6" fill="#c3c8cd"/><rect x="1971.2" y="743.9" width="1.6" height="1.6" fill="#c3c8cd"/><rect x="1975.3" y="743.9" width="1.6" height="1.6" fill="#c3c8cd"/><rect x="1979.2" y="743.9" width="1.6" height="1.6" fill="#c3c8cd"/><rect x="1983.2" y="743.9" width="1.6" height="1.6" fill="#c3c8cd"/><rect x="1742.2" y="783.5" width="16.6" height="16.6" rx="2" fill="none" stroke="#495057" stroke-width="1.8"/><rect x="1967.4" y="787.8" width="1.6" height="1.6" fill="#c3c8cd"/><rect x="1971.2" y="787.8" width="1.6" height="1.6" fill="#c3c8cd"/><rect x="1975.3" y="787.8" width="1.6" height="1.6" fill="#c3c8cd"/><rect x="1979.2" y="787.8" width="1.6" height="1.6" fill="#c3c8cd"/><rect x="1983.2" y="787.8" width="1.6" height="1.6" fill="#c3c8cd"/><rect x="1967.4" y="791.7" width="1.6" height="1.6" fill="#c3c8cd"/><rect x="1975.3" y="791.7" width="1.6" height="1.6" fill="#c3c8cd"/><rect x="1983.2" y="791.7" width="1.6" height="1.6" fill="#c3c8cd"/><rect x="1967.4" y="795.5" width="1.6" height="1.6" fill="#c3c8cd"/><rect x="1971.2" y="795.5" width="1.6" height="1.6" fill="#c3c8cd"/><rect x="1975.3" y="795.5" width="1.6" height="1.6" fill="#c3c8cd"/><rect x="1979.2" y="795.5" width="1.6" height="1.6" fill="#c3c8cd"/><rect x="1983.2" y="795.5" width="1.6" height="1.6" fill="#c3c8cd"/><rect x="1967.4" y="799.4" width="1.6" height="1.6" fill="#c3c8cd"/><rect x="1975.3" y="799.4" width="1.6" height="1.6" fill="#c3c8cd"/><rect x="1983.2" y="799.4" width="1.6" height="1.6" fill="#c3c8cd"/><rect x="1967.4" y="803.2" width="1.6" height="1.6" fill="#c3c8cd"/><rect x="1971.2" y="803.2" width="1.6" height="1.6" fill="#c3c8cd"/><rect x="1975.3" y="803.2" width="1.6" height="1.6" fill="#c3c8cd"/><rect x="1979.2" y="803.2" width="1.6" height="1.6" fill="#c3c8cd"/><rect x="1983.2" y="803.2" width="1.6" height="1.6" fill="#c3c8cd"/><rect x="1742.2" y="841.1" width="16.6" height="16.6" rx="2" fill="none" stroke="#495057" stroke-width="1.8"/><rect x="1967.4" y="845.4" width="1.6" height="1.6" fill="#c3c8cd"/><rect x="1971.2" y="845.4" width="1.6" height="1.6" fill="#c3c8cd"/><rect x="1975.3" y="845.4" width="1.6" height="1.6" fill="#c3c8cd"/><rect x="1979.2" y="845.4" width="1.6" height="1.6" fill="#c3c8cd"/><rect x="1983.2" y="845.4" width="1.6" height="1.6" fill="#c3c8cd"/><rect x="1967.4" y="849.3" width="1.6" height="1.6" fill="#c3c8cd"/><rect x="1975.3" y="849.3" width="1.6" height="1.6" fill="#c3c8cd"/><rect x="1983.2" y="849.3" width="1.6" height="1.6" fill="#c3c8cd"/><rect x="1967.4" y="853.1" width="1.6" height="1.6" fill="#c3c8cd"/><rect x="1971.2" y="853.1" width="1.6" height="1.6" fill="#c3c8cd"/><rect x="1975.3" y="853.1" width="1.6" height="1.6" fill="#c3c8cd"/><rect x="1979.2" y="853.1" width="1.6" height="1.6" fill="#c3c8cd"/><rect x="1983.2" y="853.1" width="1.6" height="1.6" fill="#c3c8cd"/><rect x="1967.4" y="857.0" width="1.6" height="1.6" fill="#c3c8cd"/><rect x="1975.3" y="857.0" width="1.6" height="1.6" fill="#c3c8cd"/><rect x="1983.2" y="857.0" width="1.6" height="1.6" fill="#c3c8cd"/><rect x="1967.4" y="860.8" width="1.6" height="1.6" fill="#c3c8cd"/><rect x="1971.2" y="860.8" width="1.6" height="1.6" fill="#c3c8cd"/><rect x="1975.3" y="860.8" width="1.6" height="1.6" fill="#c3c8cd"/><rect x="1979.2" y="860.8" width="1.6" height="1.6" fill="#c3c8cd"/><rect x="1983.2" y="860.8" width="1.6" height="1.6" fill="#c3c8cd"/><rect x="1742.2" y="922.9" width="16.6" height="16.6" rx="2" fill="none" stroke="#495057" stroke-width="1.8"/><path d="M1745.5,931.4 L1748.8,934.6 L1755.2,927.5" fill="none" stroke="#495057" stroke-width="1.6" stroke-linecap="round" stroke-linejoin="round" /><rect x="1967.4" y="927.2" width="1.6" height="1.6" fill="#c3c8cd"/><rect x="1971.2" y="927.2" width="1.6" height="1.6" fill="#c3c8cd"/><rect x="1975.3" y="927.2" width="1.6" height="1.6" fill="#c3c8cd"/><rect x="1979.2" y="927.2" width="1.6" height="1.6" fill="#c3c8cd"/><rect x="1983.2" y="927.2" width="1.6" height="1.6" fill="#c3c8cd"/><rect x="1967.4" y="931.1" width="1.6" height="1.6" fill="#c3c8cd"/><rect x="1975.3" y="931.1" width="1.6" height="1.6" fill="#c3c8cd"/><rect x="1983.2" y="931.1" width="1.6" height="1.6" fill="#c3c8cd"/><rect x="1967.4" y="934.9" width="1.6" height="1.6" fill="#c3c8cd"/><rect x="1971.2" y="934.9" width="1.6" height="1.6" fill="#c3c8cd"/><rect x="1975.3" y="934.9" width="1.6" height="1.6" fill="#c3c8cd"/><rect x="1979.2" y="934.9" width="1.6" height="1.6" fill="#c3c8cd"/><rect x="1983.2" y="934.9" width="1.6" height="1.6" fill="#c3c8cd"/><rect x="1967.4" y="938.8" width="1.6" height="1.6" fill="#c3c8cd"/><rect x="1975.3" y="938.8" width="1.6" height="1.6" fill="#c3c8cd"/><rect x="1983.2" y="938.8" width="1.6" height="1.6" fill="#c3c8cd"/><rect x="1967.4" y="942.6" width="1.6" height="1.6" fill="#c3c8cd"/><rect x="1971.2" y="942.6" width="1.6" height="1.6" fill="#c3c8cd"/><rect x="1975.3" y="942.6" width="1.6" height="1.6" fill="#c3c8cd"/><rect x="1979.2" y="942.6" width="1.6" height="1.6" fill="#c3c8cd"/><rect x="1983.2" y="942.6" width="1.6" height="1.6" fill="#c3c8cd"/><rect x="1742.2" y="982.9" width="16.6" height="16.6" rx="2" fill="none" stroke="#495057" stroke-width="1.8"/><path d="M1745.5,991.4 L1748.8,994.6 L1755.2,987.5" fill="none" stroke="#495057" stroke-width="1.6" stroke-linecap="round" stroke-linejoin="round" /><rect x="1967.4" y="987.2" width="1.6" height="1.6" fill="#c3c8cd"/><rect x="1971.2" y="987.2" width="1.6" height="1.6" fill="#c3c8cd"/><rect x="1975.3" y="987.2" width="1.6" height="1.6" fill="#c3c8cd"/><rect x="1979.2" y="987.2" width="1.6" height="1.6" fill="#c3c8cd"/><rect x="1983.2" y="987.2" width="1.6" height="1.6" fill="#c3c8cd"/><rect x="1967.4" y="991.1" width="1.6" height="1.6" fill="#c3c8cd"/><rect x="1975.3" y="991.1" width="1.6" height="1.6" fill="#c3c8cd"/><rect x="1983.2" y="991.1" width="1.6" height="1.6" fill="#c3c8cd"/><rect x="1967.4" y="994.9" width="1.6" height="1.6" fill="#c3c8cd"/><rect x="1971.2" y="994.9" width="1.6" height="1.6" fill="#c3c8cd"/><rect x="1975.3" y="994.9" width="1.6" height="1.6" fill="#c3c8cd"/><rect x="1979.2" y="994.9" width="1.6" height="1.6" fill="#c3c8cd"/><rect x="1983.2" y="994.9" width="1.6" height="1.6" fill="#c3c8cd"/><rect x="1967.4" y="998.8" width="1.6" height="1.6" fill="#c3c8cd"/><rect x="1975.3" y="998.8" width="1.6" height="1.6" fill="#c3c8cd"/><rect x="1983.2" y="998.8" width="1.6" height="1.6" fill="#c3c8cd"/><rect x="1967.4" y="1002.6" width="1.6" height="1.6" fill="#c3c8cd"/><rect x="1971.2" y="1002.6" width="1.6" height="1.6" fill="#c3c8cd"/><rect x="1975.3" y="1002.6" width="1.6" height="1.6" fill="#c3c8cd"/><rect x="1979.2" y="1002.6" width="1.6" height="1.6" fill="#c3c8cd"/><rect x="1983.2" y="1002.6" width="1.6" height="1.6" fill="#c3c8cd"/><rect x="1742.2" y="1101.1" width="16.6" height="16.6" rx="2" fill="none" stroke="#495057" stroke-width="1.8"/><path d="M1745.5,1109.6 L1748.8,1112.8 L1755.2,1105.7" fill="none" stroke="#495057" stroke-width="1.6" stroke-linecap="round" stroke-linejoin="round" /><rect x="1967.4" y="1105.4" width="1.6" height="1.6" fill="#c3c8cd"/><rect x="1971.2" y="1105.4" width="1.6" height="1.6" fill="#c3c8cd"/><rect x="1975.3" y="1105.4" width="1.6" height="1.6" fill="#c3c8cd"/><rect x="1979.2" y="1105.4" width="1.6" height="1.6" fill="#c3c8cd"/><rect x="1983.2" y="1105.4" width="1.6" height="1.6" fill="#c3c8cd"/><rect x="1967.4" y="1109.2" width="1.6" height="1.6" fill="#c3c8cd"/><rect x="1975.3" y="1109.2" width="1.6" height="1.6" fill="#c3c8cd"/><rect x="1983.2" y="1109.2" width="1.6" height="1.6" fill="#c3c8cd"/><rect x="1967.4" y="1113.1" width="1.6" height="1.6" fill="#c3c8cd"/><rect x="1971.2" y="1113.1" width="1.6" height="1.6" fill="#c3c8cd"/><rect x="1975.3" y="1113.1" width="1.6" height="1.6" fill="#c3c8cd"/><rect x="1979.2" y="1113.1" width="1.6" height="1.6" fill="#c3c8cd"/><rect x="1983.2" y="1113.1" width="1.6" height="1.6" fill="#c3c8cd"/><rect x="1967.4" y="1117.0" width="1.6" height="1.6" fill="#c3c8cd"/><rect x="1975.3" y="1117.0" width="1.6" height="1.6" fill="#c3c8cd"/><rect x="1983.2" y="1117.0" width="1.6" height="1.6" fill="#c3c8cd"/><rect x="1967.4" y="1120.8" width="1.6" height="1.6" fill="#c3c8cd"/><rect x="1971.2" y="1120.8" width="1.6" height="1.6" fill="#c3c8cd"/><rect x="1975.3" y="1120.8" width="1.6" height="1.6" fill="#c3c8cd"/><rect x="1979.2" y="1120.8" width="1.6" height="1.6" fill="#c3c8cd"/><rect x="1983.2" y="1120.8" width="1.6" height="1.6" fill="#c3c8cd"/></svg>
<svg class="r" style="left:0;top:0" width="2149" height="1173" viewBox="0 0 2149 1173"><ellipse cx="2059.6" cy="354.4" rx="85.7" ry="41.9" fill="none" stroke="#a01d65" stroke-width="7.2"/></svg>
</body></html>
